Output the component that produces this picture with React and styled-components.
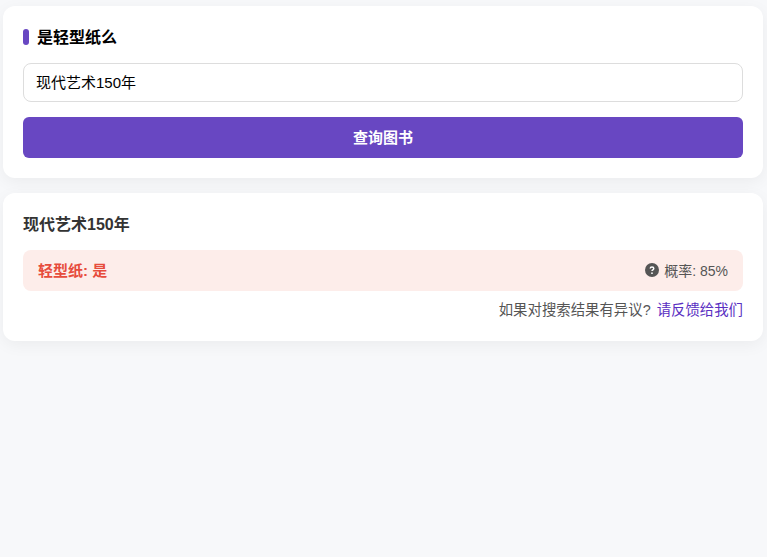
import React from "react";
import styled, { createGlobalStyle } from "styled-components";

const GlobalStyle = createGlobalStyle`
  * {
    box-sizing: border-box;
  }
  body {
    margin: 0;
    background: #f7f8fa;
    font-family: "Liberation Sans", "Noto Sans CJK SC", sans-serif;
  }
`;

function HelpIcon() {
  return (
    <svg width="14" height="14" viewBox="0 0 14 14" aria-hidden="true">
      <circle cx="7" cy="7" r="7" fill="#555" />
      <path
        d="M5.2 5.6c0-1 .8-1.6 1.8-1.6s1.8.6 1.8 1.5c0 1.3-1.8 1.3-1.8 2.5"
        fill="none"
        stroke="#fff"
        strokeWidth="1.4"
      />
      <circle cx="7" cy="10.2" r="0.85" fill="#fff" />
    </svg>
  );
}

export default function App() {
  return (
    <Page>
      <GlobalStyle />
      <Card>
        <Heading>是轻型纸么</Heading>
        <SearchInput readOnly value="现代艺术150年" />
        <SubmitButton type="button">查询图书</SubmitButton>
      </Card>
      <Card>
        <BookTitle>现代艺术150年</BookTitle>
        <ResultRow>
          <ResultLabel>轻型纸: 是</ResultLabel>
          <Probability>
            <HelpIcon />
            概率: 85%
          </Probability>
        </ResultRow>
        <Feedback>
          如果对搜索结果有异议?
          <FeedbackLink href="#">请反馈给我们</FeedbackLink>
        </Feedback>
      </Card>
    </Page>
  );
}

const Page = styled.div`
  min-height: 557px;
  padding: 6px 4px 0 3px;
  display: flex;
  flex-direction: column;
  gap: 15px;
`;

const Card = styled.section`
  background: #fff;
  border-radius: 12px;
  padding: 20px;
  box-shadow: 0 4px 16px rgba(0, 0, 0, 0.05);
  display: flex;
  flex-direction: column;
`;

const Heading = styled.h2`
  margin: 0 0 13px;
  height: 24px;
  font-size: 16px;
  line-height: 24px;
  font-weight: 700;
  color: #000;
  display: flex;
  align-items: center;
  gap: 8px;
  &::before {
    content: "";
    width: 6px;
    height: 16px;
    margin-bottom: 2px;
    border-radius: 3px;
    background: #6847c2;
  }
`;

const SearchInput = styled.input`
  width: 100%;
  height: 39px;
  padding: 0 12px 2px;
  border: 1px solid #ddd;
  border-radius: 8px;
  background: #fff;
  color: #000;
  font-family: inherit;
  font-size: 15px;
  outline: none;
`;

const SubmitButton = styled.button`
  margin-top: 15px;
  width: 100%;
  height: 41px;
  padding: 0 0 2px;
  border: 0;
  border-radius: 6px;
  background: #6847c2;
  color: #fff;
  font-family: inherit;
  font-size: 15px;
  font-weight: 700;
`;

const BookTitle = styled.h3`
  margin: 0 0 13px;
  height: 24px;
  font-size: 16px;
  line-height: 24px;
  font-weight: 700;
  color: #333;
`;

const ResultRow = styled.div`
  height: 41px;
  padding: 0 15px 2px;
  border-radius: 8px;
  background: #fdedea;
  display: flex;
  align-items: center;
  justify-content: space-between;
`;

const ResultLabel = styled.span`
  font-size: 15px;
  font-weight: 700;
  color: #e74c3c;
`;

const Probability = styled.span`
  font-size: 14px;
  color: #555;
  display: flex;
  align-items: center;
  gap: 5px;
`;

const Feedback = styled.p`
  margin: 9px 0 0;
  height: 21px;
  font-size: 14.4px;
  line-height: 21px;
  color: #555;
  text-align: right;
`;

const FeedbackLink = styled.a`
  margin-left: 6px;
  color: #5a2fc2;
  text-decoration: none;
`;
